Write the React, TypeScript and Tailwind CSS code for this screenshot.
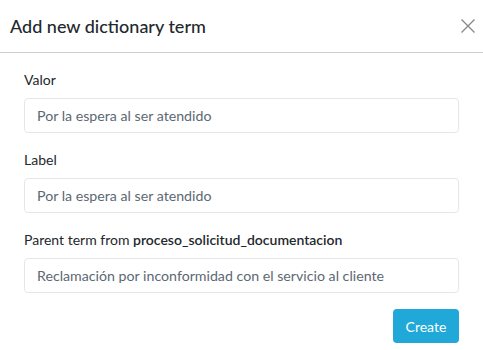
const fields = [
  { label: "Valor", value: "Por la espera al ser atendido" },
  { label: "Label", value: "Por la espera al ser atendido" },
];

function Field({ label, value }: { label: React.ReactNode; value: string }) {
  return (
    <div className="mb-4">
      <label className="block mb-2 text-[14px] leading-[21px] text-[#23282c]">{label}</label>
      <input
        readOnly
        defaultValue={value}
        className="block w-full h-[35px] px-3 rounded-[4px] border border-[#e4e7ea] bg-white text-[14.2px] text-[#5c6873] outline-none"
      />
    </div>
  );
}

export default function App() {
  return (
    <div className="w-[483px] h-[350px] bg-white font-['Lato','Noto_Sans',sans-serif] overflow-hidden">
      <div className="h-[53px] flex items-center justify-between pl-[10px] pr-[8px] border-b border-[#c8ced3]">
        <h5 className="text-[18px] font-medium text-[#23282c] leading-none">Add new dictionary term</h5>
        <svg width="14" height="14" viewBox="0 0 14 14" className="text-[#8a8a8a]">
          <path d="M0.5 0.5 L13.5 13.5 M13.5 0.5 L0.5 13.5" stroke="currentColor" strokeWidth="1.4" fill="none" />
        </svg>
      </div>
      <div className="px-6 pt-4">
        {fields.map((f) => (
          <Field key={f.label} label={f.label} value={f.value} />
        ))}
        <Field
          label={
            <>
              Parent term from <span className="font-semibold">proceso_solicitud_documentacion</span>
            </>
          }
          value="Reclamación por inconformidad con el servicio al cliente"
        />
        <div className="flex justify-end">
          <button className="h-[34px] w-[66px] rounded-[4px] bg-[#20a8d8] text-white text-[14px]">Create</button>
        </div>
      </div>
    </div>
  );
}
